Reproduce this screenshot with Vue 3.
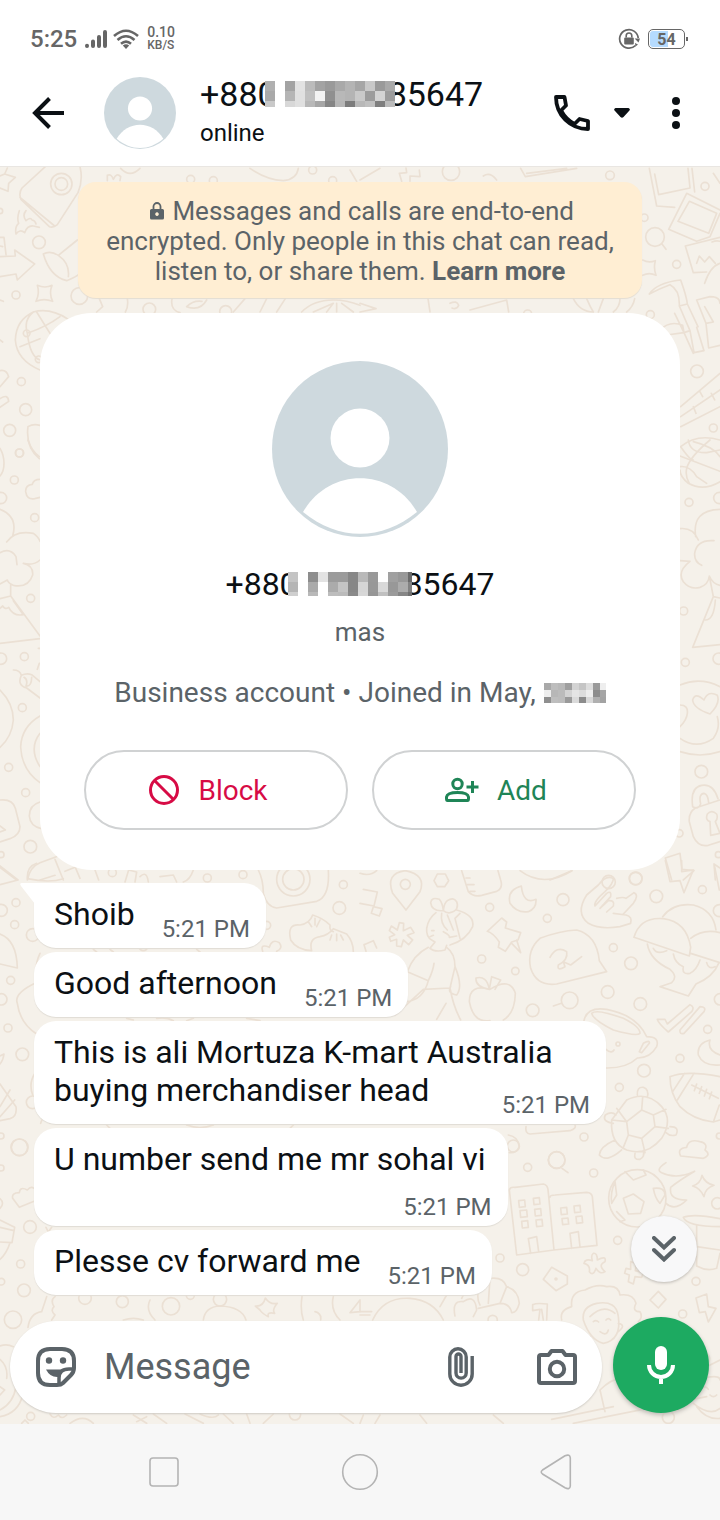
<script setup>
import { ref, h } from 'vue'

const draft = ref('')

const messages = [
  { text: 'Shoib', time: '5:21 PM', kind: 'inline first' },
  { text: 'Good afternoon', time: '5:21 PM', kind: 'inline' },
  { text: 'This is ali Mortuza K-mart Australia buying merchandiser head', time: '5:21 PM', kind: 'wrapped' },
  { text: 'U number send me mr sohal vi', time: '5:21 PM', kind: 'stacked' },
  { text: 'Plesse cv forward me', time: '5:21 PM', kind: 'inline' },
]

// Rows of grey levels used to mask private digits.
const headerMask = [
  'b0 ff a3 e2 bb a3 9a a9 b4 a6 c8 9a a9',
  'a9 ff b5 e0 c0 f3 90 b8 b4 c9 9c d3 9c',
  'c9 ff d8 e0 b8 a6 85 b6 7c b8 c0 7f bb',
]
const cardMask = [
  'c4 ff 8d e3 9b 9b 87 b9 99 ff a0 98 6a',
  'b5 ff aa ff ab c4 87 d6 98 d9 98 ac 82',
  'cf ff b9 ff bd bb 8a d8 96 c0 9b 86 70',
]
const yearMask = [
  'a9 bd b8 9f d3 c5 dd 9a ee',
  'ee b7 bb d3 e4 dd ee 8d a5',
  '8f be bc 9a da 8c d9 b0 a3',
]

const Mask = (props) =>
  h(
    'svg',
    { viewBox: `0 0 ${props.width} ${props.height}`, width: props.width, height: props.height, 'aria-hidden': 'true', 'shape-rendering': 'crispEdges' },
    props.rows.flatMap((row, y) =>
      row.split(' ').map((level, x) =>
        h('rect', { x: x * props.cell, y: y * props.cell, width: props.cell, height: props.cell, fill: `#${level}${level}${level}` })
      )
    )
  )
Mask.props = ['rows', 'cell', 'width', 'height']

const dots = {
  topLeft: [[117, 247, 19], [48, 405, 12], [238, 408, 25], [64, 665, 12], [77, 749, 18], [29, 811, 18], [58, 879, 12], [448, 448, 19], [572, 58, 12], [640, 62, 12], [938, 30, 12], [998, 62, 12], [677, 455, 18], [184, 72, 32], [184, 72, 19], [0, 153, 8]],
  topRight: [[273, 35, 26], [750, 46, 13], [1035, 79, 12], [853, 173, 11], [950, 313, 12], [871, 464, 12], [1011, 634, 19], [1060, 804, 12], [885, 231, 28], [503, 462, 12]],
  rightEdge: [[477, 187, 12], [568, 174, 17], [461, 513, 12], [466, 667, 12], [566, 656, 17], [514, 995, 19], [448, 1180, 11], [565, 1244, 9], [317, 1316, 19], [236, 1326, 20]],
  leftEdge: [[59, 39, 12], [43, 120, 12], [3, 174, 17], [104, 233, 12], [92, 475, 12], [73, 650, 12], [3, 656, 17], [67, 803, 12], [26, 982, 12], [77, 1058, 12], [91, 1220, 19], [3, 1244, 9]],
  midLeft: [[337, 38, 12], [622, 54, 12], [729, 44, 12], [1030, 74, 12], [1018, 144, 19], [48, 128, 12], [4, 151, 18], [44, 194, 12], [98, 225, 19], [800, 196, 12], [32, 361, 12], [4, 418, 17], [24, 504, 12], [67, 583, 19], [98, 727, 19], [59, 862, 25], [880, 58, 50], [880, 58, 32], [3, 828, 9]],
  midRight: [[136, 73, 15], [389, 142, 12], [562, 175, 12], [609, 119, 18], [827, 55, 19], [889, 109, 19], [1027, 89, 12], [1078, 152, 18], [760, 263, 12], [813, 310, 19], [365, 297, 12], [466, 333, 11], [743, 396, 19], [841, 432, 19], [518, 451, 19], [629, 421, 25], [1043, 508, 12], [960, 595, 12], [852, 632, 19], [778, 682, 12], [672, 831, 12], [590, 900, 25], [774, 552, 6], [1080, 418, 17], [1078, 828, 9]],
  lowRight: [[503, 82, 12], [590, 60, 25], [701, 99, 12], [773, 301, 12], [420, 354, 12], [488, 389, 18], [588, 417, 3], [1008, 424, 12], [968, 522, 12], [1072, 190, 17], [398, 540, 14], [925, 832, 18], [460, 18, 18], [832, 175, 86]],
  lowLeft: [[90, 261, 19], [62, 372, 12], [72, 451, 19], [39, 539, 26], [58, 22, 25], [4, 425, 10], [3, 84, 9], [255, 474, 19], [367, 485, 18], [513, 499, 26], [571, 466, 12], [92, 829, 12], [885, 823, 17], [660, 478, 20]],
}
</script>

<template>
  <div class="screen">
    <div class="status">
      <span class="clock">5:25</span>
      <svg class="signal" viewBox="0 0 22 18" width="22" height="18" aria-hidden="true">
        <g stroke="#666" stroke-width="4" stroke-linecap="round">
          <path d="M2 15.8v.2M8 11.500V16M14 7V16M20 2V16" />
        </g>
      </svg>
      <svg class="wifi" viewBox="0 0 26 20" width="26" height="20" aria-hidden="true">
        <g fill="none" stroke="#666" stroke-width="2.6">
          <path d="M1 7Q13-3.500 25 7M4.500 11Q13 3.500 21.500 11M8 14.800Q13 10.500 18 14.800" />
        </g>
        <path d="M9.800 16.500Q13 14 16.200 16.500L13 20Z" fill="#666" />
      </svg>
      <span class="speed"><span class="rate">0.10</span><span class="unit">KB/S</span></span>
      <svg class="rotation" viewBox="0 0 22 22" width="22" height="22" aria-hidden="true">
        <path d="M17.500 17.500A9.300 9.300 0 1 1 20.200 10" fill="none" stroke="#666" stroke-width="1.700" />
        <path d="M16.600 10.400H22L20.500 14.500ZM17 15L20 16.500L17.500 18.500Z" fill="#666" />
        <rect x="6.200" y="9.500" width="9.600" height="7" rx="1" fill="#666" />
        <path d="M8.200 9.500V7.800a2.800 2.800 0 0 1 5.600 0V9.500" fill="none" stroke="#666" stroke-width="1.600" />
      </svg>
      <span class="battery"><span class="level">54</span></span>
    </div>

    <header class="header">
      <button class="back" aria-label="Back">
        <svg viewBox="0 0 32 32" width="32" height="32" aria-hidden="true">
          <path d="M32 16H3M17.500 1.500L3 16L17.500 30.500" fill="none" stroke="#0b1014" stroke-width="4" />
        </svg>
      </button>
      <svg class="avatar" viewBox="0 0 176 176" aria-hidden="true">
        <circle cx="88" cy="88" r="88" fill="#ced9de" />
        <circle cx="88" cy="77" r="29.500" fill="#fff" />
        <path d="M31 151C57 105 119 105 145 151C110 181 66 181 31 151Z" fill="#fff" />
      </svg>
      <div class="contact">
        <h1 class="number">+880<Mask class="mask header-mask" :rows="headerMask" :cell="10" :width="131" :height="26" />85647</h1>
        <span class="presence">online</span>
      </div>
      <button class="call" aria-label="Call">
        <svg viewBox="0 0 36 36" width="36" height="36" aria-hidden="true">
          <path d="M2 2H10.500L12 10.500L7 15.500C10.500 22 14.500 26 20.500 29L25.500 24L34 26V34C16 34 2 20 2 2Z" fill="none" stroke="#0b1014" stroke-width="3.800" stroke-linejoin="round" />
        </svg>
        <svg class="caret" viewBox="0 0 16 10" width="16" height="10" aria-hidden="true">
          <path d="M1.500 0H14.500Q17 1 15 3L9.500 9Q8 10.500 6.500 9L1 3Q-1 1 1.500 0Z" fill="#0b1014" />
        </svg>
      </button>
      <button class="more" aria-label="More options">
        <svg viewBox="0 0 8 32" width="8" height="32" aria-hidden="true">
          <g fill="#0b1014"><circle cx="4" cy="4" r="4" /><circle cx="4" cy="16" r="4" /><circle cx="4" cy="28" r="4" /></g>
        </svg>
      </button>
    </header>

    <main class="chat">
      <svg class="wallpaper" viewBox="0 167 720 1257" preserveAspectRatio="xMidYMin slice" aria-hidden="true">
        <g fill="none" stroke="#ebe0d4" stroke-width="5" stroke-linecap="round" stroke-linejoin="round">
          <g transform="translate(0 160) scale(.33333)">
            <circle v-for="(d, i) in dots.topLeft" :key="i" :cx="d[0]" :cy="d[1]" :r="d[2]" />
            <path d="M136 20L66 84Q55 100 63 118L148 200Q160 204 172 194L234 98Q250 60 240 20M60 112L164 198M58 152Q50 175 56 190Q44 200 48 222Q60 206 74 218Q82 196 100 198L118 202M78 152Q66 166 78 182Q92 170 96 180Q106 182 108 192" />
            <path d="M0 48L14 42L22 24M14 42L46 52L26 70L24 94L0 84" />
            <path d="M0 290L46 288L44 270L104 312L52 360L48 342L0 350M0 232L12 232L18 284M0 258L8 260" />
            <path d="M130 282Q150 350 200 362Q230 350 240 340M130 282Q150 270 175 286Q210 310 205 350M175 286L232 240" />
            <path d="M112 376Q135 386 156 376Q146 400 158 424Q132 414 108 424Q120 400 112 376Z" />
            <path d="M120 630Q50 600 46 540Q48 480 100 456Q150 442 205 478M100 456Q70 480 82 520Q90 590 120 600M82 520Q140 500 180 470M60 560L120 536M110 456L150 520" />
            <circle cx="80" cy="520" r="10" /><circle cx="116" cy="598" r="10" />
            <path d="M0 632Q20 628 26 650L0 680M0 716Q24 700 26 724L0 742M0 420L10 424M0 540L8 546" />
            <path d="M84 800Q76 860 118 896M84 800Q100 790 120 796M322 62L322 46Q334 40 340 58Q350 36 362 50L360 62M362 25Q390 55 420 25" />
            <path d="M750 25Q800 60 850 62Q890 58 895 25M1050 30L1070 64" />
            <path d="M298 416L308 440L290 456M382 416Q386 440 376 456M516 416Q510 450 540 458M560 440Q600 455 620 420M560 440Q580 420 606 424M700 456L735 416M780 456L800 416M830 456L856 416M905 456Q940 420 1000 420Q1040 420 1080 436M940 456L1000 430L980 456M1010 430V456M1025 430L1060 456" />
          </g>
          <g transform="translate(360 160) scale(.33333)">
            <circle v-for="(d, i) in dots.topRight" :key="i" :cx="d[0]" :cy="d[1]" :r="d[2]" />
            <path d="M906 252L918 268M0 60L60 25M118 40L140 38L138 24M150 64L150 48L180 50L178 30M118 40L125 64M370 48Q390 34 410 60M482 25L496 50L650 25M500 40L620 25" />
            <path d="M868 25L890 138L944 142M884 42L896 104L990 84L984 25M996 25L1004 96M980 100L926 208L1010 244L1050 230L1080 160M980 100L1080 150M988 124L954 184L1046 220L1070 160Z" />
            <path d="M976 258L1080 232M976 258L1000 338L1040 336M1010 310L1018 288L1034 306L1048 290L1066 310M1034 370Q1050 320 1080 310M1056 246Q1070 240 1080 244M1060 40L1080 70" />
            <path d="M848 300Q866 310 886 302Q880 324 888 346Q868 336 848 346M868 402Q890 368 962 360Q980 410 982 432L958 438Q960 390 930 374Q900 385 868 402M958 438L990 512L972 518L944 460M990 512L1002 578L1032 572L1010 502M982 432L1014 500M1010 420L1050 410Q1080 410 1080 430M1010 420L1038 490L1060 486L1034 440M1038 490L1046 564L1080 556M900 510Q930 480 968 496L972 518L920 525M972 518L1000 580" />
            <path d="M962 740L1080 640M962 770L1080 690M962 800L1080 740M1018 692L1028 710M1000 740L1008 760M1054 700L1064 720M962 860Q1010 820 1080 840M962 860Q990 900 1000 900M1000 845Q1060 860 1080 890" />
            <path d="M640 416Q660 456 700 456M680 416Q690 440 700 456M730 416L715 456M780 416Q780 440 760 456M824 416Q820 440 800 456M204 416L210 456M270 430Q290 420 296 436Q290 450 276 444M330 450L440 420L446 456M0 430L48 446L0 456" />
          </g>
          <g transform="translate(530 440) scale(.33333)">
            <circle v-for="(d, i) in dots.rightEdge" :key="i" :cx="d[0]" :cy="d[1]" :r="d[2]" />
            <path d="M570 125Q520 155 475 130Q450 110 450 90M475 0Q480 40 530 38L570 30M540 0Q480 50 470 85Q465 110 478 130M450 48Q520 75 570 94M450 80Q480 76 500 110L530 130" />
            <path d="M450 266Q490 262 505 300M497 290Q485 210 570 208M552 302Q500 298 494 340Q492 365 515 376M450 362L480 364Q440 395 460 425Q480 450 510 442Q535 434 538 408Q548 432 570 436M538 408L550 470L570 474M550 470L488 622L570 614M526 540Q552 540 556 480" />
            <path d="M450 735Q510 710 570 740M450 935Q510 955 570 935M450 795Q475 795 472 820Q470 840 450 860M450 895Q500 930 550 895Q572 865 562 830M540 822Q490 805 488 780Q495 755 522 780Q535 750 562 766Q572 790 540 822Z" />
            <path d="M488 1100Q480 1042 515 1036Q550 1030 564 1076M488 1100Q505 1110 512 1092Q505 1062 522 1060Q534 1062 536 1088M570 1080L496 1104Q475 1118 478 1145L490 1190Q505 1222 535 1216L570 1205M540 1145Q525 1140 532 1122Q545 1108 560 1122Q565 1135 556 1145L570 1180L542 1186Z" />
            <path d="M406 1254L450 1240L456 1288L492 1292L460 1320M406 1254L425 1320M552 1272L570 1284M552 1272L556 1320M60 1320L125 1292" />
          </g>
          <g transform="translate(0 440) scale(.33333)">
            <circle v-for="(d, i) in dots.leftEdge" :key="i" :cx="d[0]" :cy="d[1]" :r="d[2]" />
            <path d="M0 25Q12 45 12 70Q12 95 0 108M84 0Q94 32 118 50M120 118Q100 118 97 133Q76 135 77 155Q80 180 104 176L120 172" />
            <path d="M0 208Q55 230 38 288L20 306Q45 270 100 280Q115 290 120 304M120 360Q100 378 70 370Q100 376 98 405Q85 445 40 436Q25 430 22 420L0 432M0 338Q30 322 48 350L51 374M32 436V468L0 476M32 468L120 588M0 610L120 596M40 482L70 524Q40 530 26 502Q15 510 8 498L0 505" />
            <path d="M40 690Q60 690 64 706Q50 735 80 744L120 774M64 706Q80 698 95 704L120 725M72 712Q85 720 78 738Q95 740 95 712M0 750Q40 790 40 840Q36 890 0 922M120 828Q65 860 62 920Q65 990 120 1028M120 880Q85 925 120 980M120 1086Q88 1095 88 1128Q90 1158 124 1166" />
            <path d="M0 1080Q38 1076 46 1105L60 1160Q60 1185 30 1196L0 1206M0 1158L16 1170L0 1176M0 1282L50 1320M82 1320Q90 1280 120 1268L175 1248M165 1258L190 1320M120 1320L165 1306M195 1294L240 1276M225 1280L240 1315M285 1290L296 1320M115 625L120 625M112 688L118 670" />
          </g>
          <g transform="translate(0 860) scale(.33333)">
            <circle v-for="(d, i) in dots.midLeft" :key="i" :cx="d[0]" :cy="d[1]" :r="d[2]" />
            <path d="M0 18L54 60L0 74M82 56Q80 20 110 10M82 56Q150 70 190 56M375 66L386 30L410 36L405 66M420 50Q440 30 445 66M480 50L520 45L530 66M550 66Q570 60 580 30M775 30Q790 60 790 100Q800 140 830 144L950 124Q990 110 985 30" />
            <path d="M0 222Q50 240 52 324L0 312M120 280Q105 310 108 350M108 368Q40 400 52 430Q60 490 110 522M0 588L12 582Q10 600 0 612M0 672L48 740Q52 770 30 776L0 782M0 740L30 690M0 770L44 720M105 640Q85 670 98 705M122 790Q130 760 150 790" />
            <path d="M872 240Q860 190 900 195Q930 190 938 165Q970 175 990 195Q988 215 1000 215M872 240Q890 270 935 272M935 272Q925 235 960 230Q985 225 1000 206L1040 222Q1060 245 1060 275M925 185L935 200M945 175V195M960 180L950 200M990 240L995 225M1010 242V222M1030 240L1022 225" />
            <path d="M788 274Q780 250 808 262Q815 235 838 248Q850 265 830 274M280 268L290 276M330 268L340 276M420 268Q430 276 440 268M590 268L600 276M380 475L400 480M470 475Q500 470 520 482M560 482L580 475M740 475L780 482M320 795L330 805M560 795Q600 810 640 795M880 795L870 805" />
          </g>
          <g transform="translate(360 860) scale(.33333)">
            <circle v-for="(d, i) in dots.midRight" :key="i" :cx="d[0]" :cy="d[1]" :r="d[2]" />
            <path d="M138 150L98 100Q75 40 136 32Q200 45 180 95ZM232 42L256 42L266 62L254 80L232 80L222 62ZM10 88L52 96L42 138L0 130M40 140L66 146L58 168L34 160ZM12 254L40 242L50 264M12 254L18 274" />
            <path d="M305 32L325 95Q340 112 365 106L410 94Q430 85 422 60L414 32M318 54H330M322 74H342M330 94H345M480 32Q550 85 636 32M0 40Q30 50 50 32" />
            <path d="M484 78Q440 90 450 130Q470 160 505 155Q530 145 528 118Q490 135 484 78ZM382 214L425 174L440 186L436 204L482 218L474 240L455 246L436 274L415 262L418 246Q400 220 382 214ZM455 250L482 278L470 240" />
            <path d="M118 188L131 190L130 212L152 202L162 218L142 226L158 240L146 254L130 240L124 260L110 258L110 238L92 244L88 232L104 224L88 212L94 198L112 210Z" />
            <path d="M250 152Q215 155 212 128Q215 110 238 118Q248 130 250 152Q260 160 270 158Q300 150 290 125Q280 110 262 122Q252 130 250 152M228 158Q205 175 200 205Q198 230 215 240L225 246L210 265Q225 278 255 270L260 256M245 160Q240 190 262 210M262 165L280 210M250 215Q270 225 268 232L290 228M290 150Q345 165 338 200Q320 240 270 255M300 160L285 175L300 235" />
            <path d="M205 262Q160 285 142 335L205 362Q220 330 222 310M260 262Q285 280 285 320L270 384L190 388M205 362Q190 420 140 425M190 388L105 466M270 384Q280 440 302 480M285 320Q310 380 290 405Q260 400 272 380M230 478L258 430M215 212H222M210 230L220 226" />
            <path d="M390 482Q340 490 328 425Q328 370 390 388Q450 350 466 400Q465 460 430 480M388 388Q345 380 348 354Q380 345 388 388L395 350L422 360L405 388" />
            <path d="M540 235Q500 270 512 325Q530 380 590 372L740 335L718 302Q710 225 650 210Q600 212 540 235ZM570 292Q590 255 620 275Q625 300 595 315Q590 335 615 320L610 305L632 315L665 290M580 438L604 430" />
            <path d="M760 56Q740 42 715 75L680 105Q645 160 685 190Q720 210 780 200L812 190Q818 170 798 165L760 160M760 56Q760 70 735 95Q700 125 705 138L740 100Q755 90 752 110L720 145L745 122Q765 120 760 138L740 156M798 115L822 98Q838 105 820 130L790 162M770 115Q790 110 798 115" />
            <path d="M822 232Q840 170 910 176Q980 185 992 262L988 288ZM908 170Q940 128 1000 135Q1060 150 1068 210M992 235Q1030 205 1080 218M992 280L1080 308M862 252Q870 300 930 328Q955 350 935 368L900 380L985 408L1008 372Q1060 350 1076 310M880 265Q890 285 920 272M940 282Q945 310 970 320Q965 345 990 340Q1010 330 1020 300M1040 308Q1045 330 1065 320" />
            <path d="M916 2L930 65L960 62L972 98L1000 30L965 35L965 2M1064 20L1078 90M892 478L915 478L922 492L990 434Q1005 440 995 455L925 516Q895 490 892 478ZM960 510L1020 440Q1040 440 1032 455L972 520Q958 524 960 510Z" />
            <path d="M672 482Q680 440 740 448Q830 465 860 530Q900 530 890 560Q870 595 832 594Q800 625 738 624M695 460Q700 480 760 510Q830 530 840 520Q840 500 790 475Q710 445 695 460ZM838 575L850 550Q870 538 868 550L845 578ZM738 568Q755 582 762 570" />
            <path d="M1050 540Q1010 550 1015 585Q1030 620 1080 615M1050 540Q1040 570 1080 585M930 650Q980 630 1080 650M930 650Q930 700 960 740Q1000 780 1060 786L1080 780M974 640L938 695M1002 640L952 720M1060 786L1078 735M995 675L1075 715M1010 672L1003 692M1025 680L1018 700M1040 688L1033 708M1055 696L1048 716" />
            <path d="M800 720Q860 690 905 740Q940 780 905 835Q860 890 800 870Q750 850 755 780ZM845 750L880 765L885 800L845 835L805 825L800 785ZM845 750L848 712M880 765L918 748M885 800L925 805M845 835L855 878M805 825L790 862M800 785L755 780M800 785L770 745M832 705Q830 680 850 682Q868 688 862 712M760 790Q725 785 736 765Q755 752 768 765M930 800Q960 800 948 825Q930 830 918 818M765 840Q720 860 718 885Q740 910 785 870M825 880Q820 900 840 898Q855 890 850 872" />
            <path d="M962 888Q950 865 980 862Q985 835 1020 845Q1045 850 1035 870Q1055 885 1030 895ZM498 800Q495 820 510 822L630 812Q650 805 645 795M445 825Q475 830 478 860Q470 880 448 878" />
          </g>
          <g transform="translate(360 1140) scale(.33333)">
            <circle v-for="(d, i) in dots.lowRight" :key="i" :cx="d[0]" :cy="d[1]" :r="d[2]" />
            <path d="M448 150Q450 140 465 142L550 132Q562 135 564 148L582 330L470 345ZM570 172Q570 165 585 165L680 157Q695 158 697 170L711 316L582 330M505 296L530 290L536 335M505 296L512 340M630 280L655 275L660 320M630 280L635 325M606 85L624 98" />
            <path d="M476 182L494 180L496 200L478 202ZM520 175L538 173L540 192L522 194ZM480 212L500 210L502 230L482 232ZM524 208L542 206L544 226L526 228ZM485 244L503 242L505 262L487 264ZM528 240L546 238L548 258L530 260ZM602 204L620 202L622 222L604 224ZM642 198L660 196L662 216L644 218ZM606 236L624 234L626 252L608 254ZM648 230L666 228L668 248L650 250Z" />
            <path d="M790 175L820 162L852 185L842 220L805 222ZM795 95L820 120L858 105L850 90M765 125Q750 160 755 190L770 165ZM880 145Q915 140 915 165L900 190Q885 175 880 145M770 215L795 240L780 245M905 98Q885 90 918 68M905 98Q950 120 1004 94Q960 120 932 142Q925 180 980 180Q945 215 918 190" />
            <path d="M1026 106Q1035 130 1062 136Q1035 145 1032 170Q1022 145 998 138Q1022 130 1026 106ZM970 232Q1000 220 1080 236M970 232Q980 260 1080 260M1010 255V378M1010 320L1080 330M1010 378Q1040 395 1070 385L1080 340" />
            <path d="M700 340Q712 338 712 360Q740 345 735 365Q712 375 735 395Q720 405 708 385Q700 410 688 395Q692 375 672 370Q675 355 697 362Q692 345 700 340ZM575 382L550 418L588 452L622 432V408ZM812 365L830 370L826 392L850 398L845 412L825 410L820 432L805 425L808 405L794 400L798 385L812 388ZM895 454L918 478L895 504L870 480ZM1008 474L1040 462L1045 500L1068 505L1045 546L1036 515L1018 518Z" />
            <path d="M605 540Q598 510 635 500Q630 455 675 450Q710 430 740 440Q775 435 780 465Q820 460 828 490Q815 515 840 515Q850 530 835 545M670 540Q665 500 710 490Q770 480 775 530Q785 600 730 610Q690 600 670 540ZM690 530Q730 490 765 520M700 545Q708 538 716 546M738 540Q745 532 752 540M720 575Q740 590 745 570M620 610Q650 590 690 590M775 550Q800 555 775 575" />
            <path d="M285 528Q275 480 310 485Q345 460 350 510L340 530M305 475Q320 440 355 450Q350 480 360 495M345 445Q360 410 390 415L385 490M390 415Q430 410 440 440L420 490M440 440Q475 450 478 490Q470 520 455 518Q450 490 420 490L355 505M518 494Q530 488 562 492L560 540M518 494V512L540 508L536 540M545 508L550 540M0 515H35M38 540Q70 470 150 475Q220 480 250 540M0 525H30M240 500L260 465" />
            <path d="M575 838L760 800M640 850L1040 770M720 750L735 815M800 720L812 760M720 750Q760 710 790 718M1040 640Q1055 650 1045 670M1040 680Q1070 665 1080 660M1008 720Q1080 700 1080 720M1000 790Q1050 830 1080 805M1010 800Q1040 840 1080 835M1025 745Q1035 735 1045 748M1050 765Q1060 775 1070 765M0 850L10 825M45 850L60 825M200 850L180 825M430 850L400 825" />
          </g>
          <g transform="translate(0 1140) scale(.33333)">
            <circle v-for="(d, i) in dots.lowLeft" :key="i" :cx="d[0]" :cy="d[1]" :r="d[2]" />
            <path d="M102 145Q92 138 82 150Q60 138 58 158Q34 158 38 175L58 202L102 184M0 240L44 262L36 308L0 306M0 262L42 272M30 308Q20 340 0 358M138 262L145 276L155 262M0 176Q15 190 0 205" />
            <path d="M140 470L125 515Q90 520 84 562M165 470Q150 480 162 500Q150 512 165 525L155 540M450 480Q435 510 465 540M610 540Q615 500 660 498Q725 500 738 540M766 498Q790 500 796 474Q810 495 832 490Q815 510 824 520Q800 515 805 530Q785 520 780 510ZM906 470Q900 510 910 540M945 515Q965 520 962 540M1000 470Q990 510 1020 540M1050 518L1080 480V515ZM370 540Q400 530 430 540" />
            <path d="M0 618Q20 610 40 620M0 658Q25 680 20 715M0 740L14 750L0 765M68 765Q55 820 0 830M48 740Q40 790 0 810M65 850L75 840L85 850M150 822Q160 840 175 825Q185 840 200 825M210 850Q250 820 280 850M400 825L440 850M410 845L440 830M500 850L460 822M555 822L610 850M600 822Q640 840 655 825M700 850L670 822M750 850L740 822M790 850L820 822M1020 822L1060 850" />
          </g>
        </g>
      </svg>

      <p class="notice">
        <svg class="lock" viewBox="0 0 14 18" width="14" height="18" aria-hidden="true">
          <path fill-rule="evenodd" d="M1.500 7H12.500Q14 7 14 8.500V16Q14 17.500 12.500 17.500H1.500Q0 17.500 0 16V8.500Q0 7 1.500 7ZM7 10.300a1.800 1.800 0 1 0 .01 0Z" fill="#5b6368" />
          <path d="M3.500 7V4.500a3.500 3.500 0 0 1 7 0V7" fill="none" stroke="#5b6368" stroke-width="1.800" />
        </svg>
        Messages and calls are end-to-end encrypted. Only people in this chat can read, listen to, or share them. <a class="learn" href="#">Learn more</a>
      </p>

      <section class="card">
        <svg class="portrait" viewBox="0 0 176 176" aria-hidden="true">
          <circle cx="88" cy="88" r="88" fill="#ced9de" />
          <circle cx="88" cy="77" r="29.500" fill="#fff" />
          <path d="M31 151C57 106 119 106 145 151C110 180 66 180 31 151Z" fill="#fff" />
        </svg>
        <h2 class="card-number">+880<Mask class="mask card-mask" :rows="cardMask" :cell="10" :width="124" :height="24" />85647</h2>
        <p class="nickname">mas</p>
        <p class="account">Business account • Joined in May, <Mask class="mask" :rows="yearMask" :cell="7" :width="62" :height="20" /></p>
        <div class="actions">
          <button class="action block">
            <svg viewBox="0 0 32 32" width="32" height="32" aria-hidden="true">
              <g fill="none" stroke="#d70b45" stroke-width="3"><circle cx="16" cy="16" r="13.500" /><path d="M6.500 6.500L25.500 25.500" /></g>
            </svg>
            Block
          </button>
          <button class="action add">
            <svg viewBox="0 0 34 26" width="34" height="26" aria-hidden="true">
              <g fill="none" stroke="#1f8557" stroke-width="3" stroke-linejoin="round">
                <circle cx="12.500" cy="7" r="4.700" />
                <path d="M2.500 23.500Q1.500 23.500 1.500 21.500V20C2 17 6 15.500 12.500 15.500S23 17 23.500 20V21.500Q23.500 23.500 22.500 23.500Z" />
                <path d="M21.500 10H33.500M27.500 4V16" />
              </g>
            </svg>
            Add
          </button>
        </div>
      </section>

      <ul class="messages">
        <li v-for="message in messages" :key="message.text" class="bubble" :class="message.kind">
          <svg v-if="message.kind.includes('first')" class="tail" viewBox="0 0 15 21" width="15" height="21" aria-hidden="true">
            <path d="M15 0H2Q-1 0 1 3L15 21Z" fill="#fff" />
          </svg>
          <span class="text">{{ message.text }}</span>
          <time class="time">{{ message.time }}</time>
        </li>
      </ul>

      <button class="jump" aria-label="Scroll to latest">
        <svg viewBox="0 0 24 26" width="24" height="26" aria-hidden="true">
          <path d="M2 2L12 11.500L22 2M2 14L12 23.500L22 14" fill="none" stroke="#5b6368" stroke-width="4" stroke-linecap="round" />
        </svg>
      </button>

      <form class="composer" @submit.prevent>
        <div class="field">
          <button type="button" class="icon" aria-label="Stickers">
            <svg viewBox="0 0 40 40" width="40" height="40" aria-hidden="true">
              <path d="M14 2H26Q38 2 38 14V21Q38 25 35 28L27 36Q25 38 21 38H14Q2 38 2 26V14Q2 2 14 2Z" fill="none" stroke="#5b6368" stroke-width="4" />
              <path d="M38 22H33Q23 22 23 31V38" fill="none" stroke="#5b6368" stroke-width="3.500" />
              <circle cx="13" cy="13.500" r="3.200" fill="#5b6368" /><circle cx="27" cy="13.500" r="3.200" fill="#5b6368" />
              <path d="M10 22.500H29L22 30Q14 30.500 10 22.500Z" fill="#5b6368" />
            </svg>
          </button>
          <input v-model="draft" class="input" type="text" placeholder="Message" aria-label="Message" />
          <button type="button" class="icon clip" aria-label="Attach">
            <svg viewBox="0 0 26 40" width="26" height="40" aria-hidden="true">
              <path d="M24.200 9V27A11.200 11.200 0 0 1 1.800 27V10A8.200 8.200 0 0 1 18.200 10V26A5.100 5.100 0 0 1 8 26V9.500M8 9.500A2.500 2.500 0 0 1 13 9.500V26" fill="none" stroke="#5b6368" stroke-width="3.400" />
            </svg>
          </button>
          <button type="button" class="icon" aria-label="Camera">
            <svg viewBox="0 0 40 36" width="40" height="36" aria-hidden="true">
              <path d="M4 6H11.500L14.500 2H25.500L28.500 6H36Q38 6 38 8V32Q38 34 36 34H4Q2 34 2 32V8Q2 6 4 6Z" fill="none" stroke="#5b6368" stroke-width="4" stroke-linejoin="round" />
              <circle cx="20" cy="20" r="7.200" fill="none" stroke="#5b6368" stroke-width="4" />
            </svg>
          </button>
        </div>
        <button type="button" class="mic" aria-label="Record voice message">
          <svg viewBox="0 0 28 38" width="28" height="38" aria-hidden="true">
            <rect x="8" y="0" width="12" height="24" rx="6" fill="#fff" />
            <path d="M2 19A12 12 0 0 0 26 19M14 31V38" fill="none" stroke="#fff" stroke-width="4" />
          </svg>
        </button>
      </form>
    </main>

    <nav class="system">
      <button aria-label="Recent apps">
        <svg viewBox="0 0 38 38" width="38" height="38" aria-hidden="true"><rect x="5" y="5" width="28" height="28" rx="3" fill="none" stroke="#b4b4b4" stroke-width="1.600" /></svg>
      </button>
      <button aria-label="Home">
        <svg viewBox="0 0 38 38" width="38" height="38" aria-hidden="true"><circle cx="19" cy="19" r="17.300" fill="none" stroke="#b4b4b4" stroke-width="1.600" /></svg>
      </button>
      <button aria-label="Back">
        <svg viewBox="0 0 38 38" width="38" height="38" aria-hidden="true"><path d="M28 2.800L5.500 17Q3 19 5.500 21L28 34.800Q33 37 33.300 33V5Q33 .8 28 2.800Z" fill="none" stroke="#b4b4b4" stroke-width="1.600" /></svg>
      </button>
    </nav>
  </div>
</template>

<style>
body {
  margin: 0;
}
</style>

<style scoped>
.screen {
  display: flex;
  flex-direction: column;
  min-height: 100vh;
  background: #fff;
  color: #0b1014;
  font-family: Roboto, "Noto Sans", sans-serif;
}
button {
  margin: 0;
  padding: 0;
  border: 0;
  background: none;
  color: inherit;
  font: inherit;
  cursor: pointer;
}
svg {
  display: block;
  flex: none;
}
h1, h2, p, ul {
  margin: 0;
  padding: 0;
  font-weight: 400;
}
.status {
  display: flex;
  align-items: center;
  flex: none;
  height: 76px;
  padding: 2px 32px 0 30px;
  box-sizing: border-box;
  color: #666;
  font-weight: 500;
}
.clock {
  font-size: 24px;
  line-height: 28px;
}
.signal {
  margin-left: 8px;
}
.wifi {
  margin-left: 6px;
}
.speed {
  display: flex;
  flex-direction: column;
  margin: 0 auto 0 8px;
}
.rate {
  font-size: 14px;
  line-height: 13px;
}
.unit {
  font-size: 12px;
  line-height: 13px;
}
.rotation {
  margin-right: 8px;
}
.battery {
  position: relative;
  width: 37px;
  height: 20px;
  box-sizing: border-box;
  margin-right: 3px;
  border: 1px solid #666;
  border-radius: 5px;
  background: linear-gradient(90deg, #b5dbff 54%, #fff 54%) content-box;
  padding: 1px;
}
.battery::after {
  content: "";
  position: absolute;
  right: -4px;
  top: 7px;
  width: 2px;
  height: 4px;
  background: #666;
}
.level {
  display: block;
  text-align: center;
  font-size: 16px;
  line-height: 17px;
  font-weight: 700;
}
.header {
  display: flex;
  align-items: center;
  flex: none;
  height: 91px;
  padding: 0 40px 16px 32px;
  box-sizing: border-box;
  border-bottom: 1px solid #e9e6e2;
}
.avatar {
  width: 72px;
  height: 72px;
  margin: 0 24px 0 40px;
}
.contact {
  display: flex;
  flex-direction: column;
  flex: 1;
  min-width: 0;
}
.number {
  display: flex;
  align-items: center;
  font-size: 34px;
  line-height: 40px;
}
.mask {
  position: relative;
}
.header-mask {
  margin: 0 -8px 0 -12px;
}
.presence {
  font-size: 24px;
  line-height: 38px;
}
.call {
  display: flex;
  align-items: center;
  gap: 24px;
}
.more {
  margin-left: 42px;
}
.chat {
  position: relative;
  display: flex;
  flex-direction: column;
  flex: 1 0 auto;
  overflow: hidden;
  padding: 15px 0 11px;
  background: #f5f1ea;
}
.wallpaper {
  position: absolute;
  inset: 0;
  width: 100%;
  height: 100%;
}
.notice {
  position: relative;
  align-self: center;
  width: 564px;
  max-width: 90%;
  padding: 14px 24px 12px;
  box-sizing: border-box;
  border-radius: 18px;
  background: #ffeed3;
  box-shadow: 0 1px 1px #e4ddd2;
  color: #5b6368;
  font-size: 26px;
  line-height: 30px;
  text-align: center;
}
.lock {
  display: inline-block;
  margin: 0 2px 0 4px;
}
.learn {
  color: inherit;
  font-weight: 700;
  text-decoration: none;
}
.card {
  position: relative;
  display: flex;
  flex-direction: column;
  align-items: center;
  margin: 15px 40px 13px;
  padding: 48px 44px 40px;
  border-radius: 52px;
  background: #fff;
}
.portrait {
  width: 176px;
  height: 176px;
}
.card-number {
  display: flex;
  align-items: center;
  margin-top: 28px;
  font-size: 32px;
  line-height: 38px;
}
.card-mask {
  margin: 0 -7px 0 -10px;
}
.nickname, .account {
  color: #5b6368;
  line-height: 30px;
}
.nickname {
  margin-top: 14px;
  font-size: 26px;
}
.account {
  display: flex;
  align-items: center;
  gap: 8px;
  margin-top: 31px;
  font-size: 28px;
}
.actions {
  display: flex;
  gap: 24px;
  align-self: stretch;
  margin-top: 42px;
}
.action {
  display: flex;
  align-items: center;
  justify-content: center;
  gap: 18px;
  flex: 1;
  height: 80px;
  padding-right: 16px;
  border: 2px solid #d0d2d3;
  border-radius: 40px;
  font-size: 28px;
}
.block {
  color: #d70b45;
}
.add {
  color: #1f8557;
}
.messages {
  position: relative;
  display: flex;
  flex-direction: column;
  align-items: flex-start;
  gap: 4px;
  margin: 0 34px 22px;
  list-style: none;
}
.bubble {
  position: relative;
  display: flex;
  max-width: 572px;
  box-sizing: border-box;
  padding: 12px 16px 5px 20px;
  border-radius: 22px;
  background: #fff;
  box-shadow: 0 1px 1px #e0dcd5;
}
.first {
  border-top-left-radius: 0;
}
.tail {
  position: absolute;
  top: 0;
  left: -14px;
}
.text {
  font-size: 32px;
  line-height: 38px;
}
.time {
  align-self: flex-end;
  color: #5b6368;
  font-size: 24px;
  line-height: 28px;
}
.inline .text {
  margin-bottom: 10px;
}
.inline .time {
  margin-left: 27px;
}
.wrapped, .stacked {
  flex-direction: column;
}
.wrapped .time {
  margin-top: -18px;
}
.stacked .time {
  margin-top: 15px;
}
.stacked .text {
  margin-right: 6px;
}
.jump {
  position: absolute;
  right: 23px;
  bottom: 142px;
  display: grid;
  place-items: center;
  width: 66px;
  height: 66px;
  border-radius: 50%;
  background: #f8f8f9;
  box-shadow: 0 1px 3px #bdb9b3;
}
.composer {
  position: relative;
  display: flex;
  align-items: flex-end;
  gap: 11px;
  margin: auto 11px 0 10px;
}
.field {
  display: flex;
  align-items: center;
  flex: 1;
  min-width: 0;
  height: 92px;
  box-sizing: border-box;
  padding: 0 25px 0 26px;
  border-radius: 46px;
  background: #fff;
  box-shadow: 0 1px 2px #cfcbc4;
}
.input {
  flex: 1;
  min-width: 0;
  margin: 0 24px 0 28px;
  padding: 0;
  border: 0;
  outline: 0;
  background: none;
  color: #0b1014;
  font: 36px/44px Roboto, "Noto Sans", sans-serif;
}
.input::placeholder {
  color: #5b6368;
  opacity: 1;
}
.clip {
  margin-right: 63px;
}
.mic {
  display: grid;
  place-items: center;
  width: 96px;
  height: 96px;
  border-radius: 50%;
  background: #1daa61;
  box-shadow: 0 2px 4px #bcb9b3;
}
.system {
  display: flex;
  flex: none;
  justify-content: center;
  align-items: center;
  gap: 158px;
  height: 96px;
  background: #f7f7f7;
}
</style>
